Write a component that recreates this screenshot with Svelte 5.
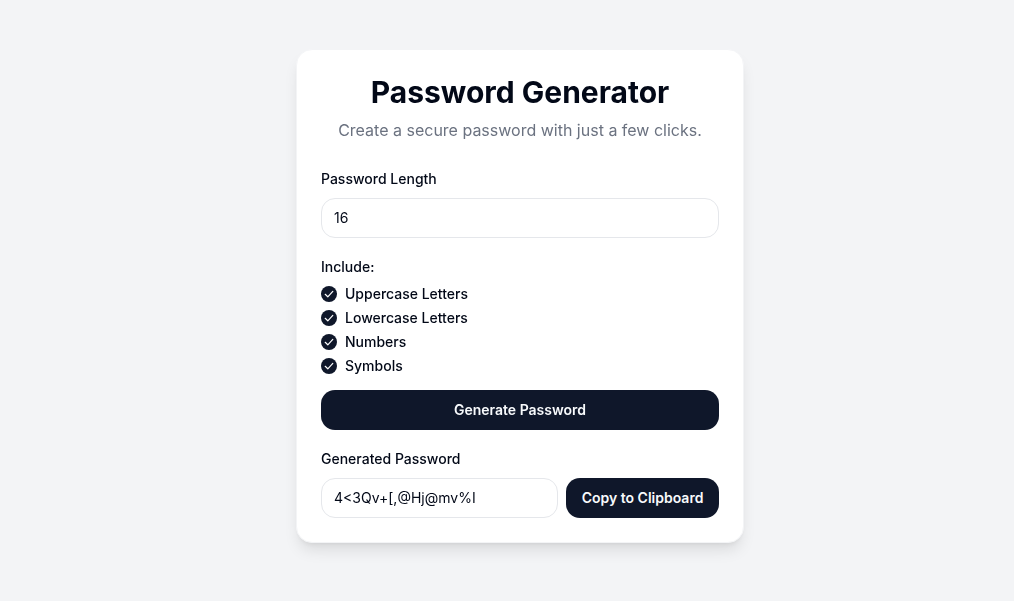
<script lang="ts">
  let length = $state(16);
  let password = $state("4<3Qv+[,@Hj@mv%I");

  const options = [
    "Uppercase Letters",
    "Lowercase Letters",
    "Numbers",
    "Symbols",
  ];
</script>

<main class="page">
  <section class="card">
    <h1>Password Generator</h1>
    <p class="subtitle">Create a secure password with just a few clicks.</p>

    <div class="field">
      <label for="length">Password Length</label>
      <input id="length" type="text" bind:value={length} />
    </div>

    <div class="include">
      <span class="label">Include:</span>
      <ul>
        {#each options as option}
          <li>
            <svg width="16" height="16" viewBox="0 0 16 16" aria-hidden="true">
              <circle cx="8" cy="8" r="8" fill="#0f172a" />
              <path d="M4.2 8.3l2.6 2.5 5-5.4" fill="none" stroke="#fff" stroke-width="1.2" stroke-linecap="round" stroke-linejoin="round" />
            </svg>
            {option}
          </li>
        {/each}
      </ul>
    </div>

    <button class="generate">Generate Password</button>

    <div class="field result">
      <label for="result">Generated Password</label>
      <div class="row">
        <input id="result" type="text" readonly bind:value={password} />
        <button class="copy">Copy to Clipboard</button>
      </div>
    </div>
  </section>
</main>

<style>
  :global(body) {
    margin: 0;
    background: #f3f4f6;
    font-family: Inter, "Liberation Sans", sans-serif;
  }

  .page {
    height: 601px;
    box-sizing: border-box;
    padding: 48.5px 0 0 296px;
  }

  .card {
    width: 448px;
    box-sizing: border-box;
    padding: 24px;
    background: #fff;
    border: 1px solid #f3f4f6;
    border-radius: 16px;
    box-shadow: 0 10px 15px -3px rgba(0, 0, 0, 0.1), 0 4px 6px -4px rgba(0, 0, 0, 0.1);
    color: #020817;
    will-change: opacity;
  }

  h1 {
    margin: 0;
    font-size: 30px;
    line-height: 36px;
    font-weight: 700;
    text-align: center;
  }

  .subtitle {
    margin: 8px 0 0;
    font-size: 16px;
    line-height: 24px;
    color: #6b7280;
    text-align: center;
  }

  .field {
    margin-top: 27.5px;
  }

  label,
  .label {
    display: block;
    font-size: 14px;
    line-height: 20px;
    font-weight: 500;
  }

  input {
    display: block;
    width: 100%;
    height: 40px;
    margin-top: 8.5px;
    padding: 0 12px;
    box-sizing: border-box;
    border: 1px solid #e5e7eb;
    border-radius: 14px;
    background: #fff;
    color: inherit;
    font: 400 14px Inter, "Liberation Sans", sans-serif;
    outline: none;
  }

  .include {
    margin-top: 19.5px;
  }

  ul {
    list-style: none;
    margin: 4.5px 0 0;
    padding: 0;
  }

  li {
    display: flex;
    align-items: center;
    gap: 8px;
    height: 24px;
    font-size: 14px;
    font-weight: 500;
  }

  button {
    height: 40px;
    border: none;
    border-radius: 14px;
    background: #0f172a;
    color: #f8fafc;
    font: 600 14px Inter, "Liberation Sans", sans-serif;
  }

  .generate {
    display: block;
    width: 100%;
    margin-top: 12px;
  }

  .field.result {
    margin-top: 19px;
  }

  .row {
    display: flex;
    gap: 8px;
    margin-top: 9px;
  }

  .row input {
    flex: 1;
    min-width: 0;
    margin-top: 0;
  }

  .copy {
    flex: none;
    width: 153px;
  }
</style>
